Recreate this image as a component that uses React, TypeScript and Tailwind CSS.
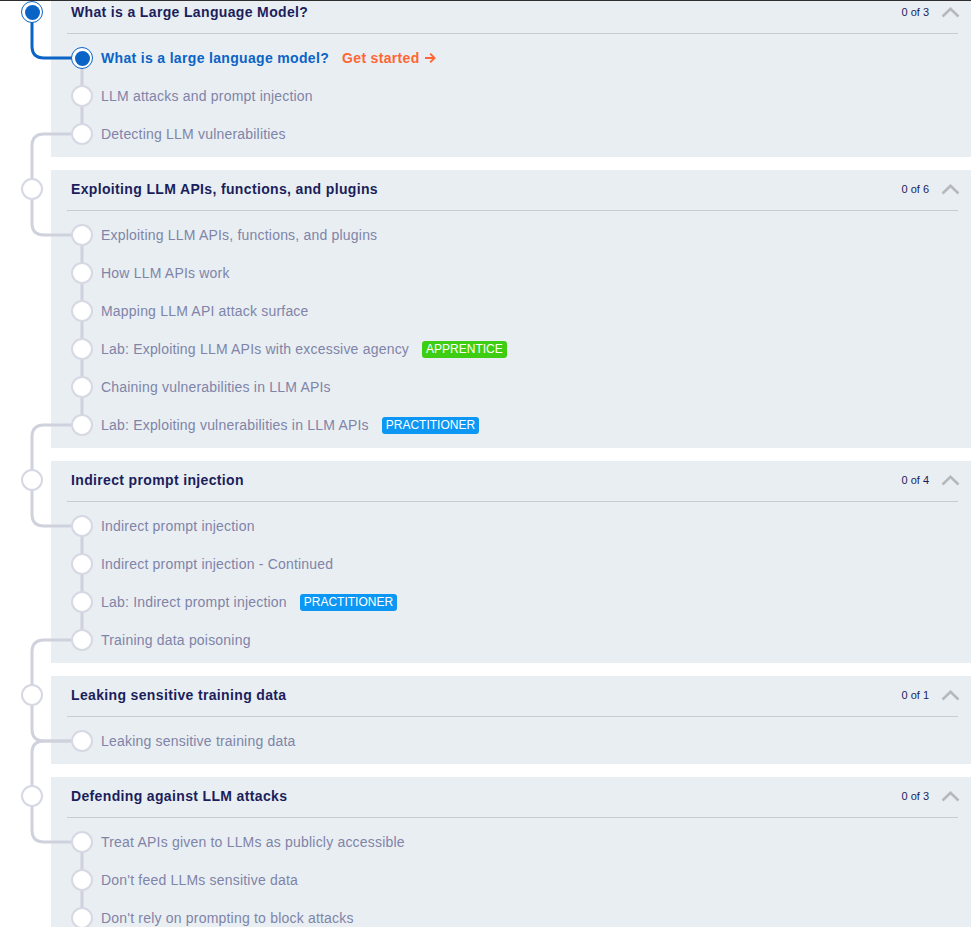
import React from 'react'

type Badge = 'apprentice' | 'practitioner'

interface Item {
    label: string
    active?: boolean
    badge?: Badge
}

interface Section {
    title: string
    active?: boolean
    items: Item[]
}

const sections: Section[] = [
    {
        title: 'What is a Large Language Model?',
        active: true,
        items: [
            { label: 'What is a large language model?', active: true },
            { label: 'LLM attacks and prompt injection' },
            { label: 'Detecting LLM vulnerabilities' }
        ]
    },
    {
        title: 'Exploiting LLM APIs, functions, and plugins',
        items: [
            { label: 'Exploiting LLM APIs, functions, and plugins' },
            { label: 'How LLM APIs work' },
            { label: 'Mapping LLM API attack surface' },
            { label: 'Lab: Exploiting LLM APIs with excessive agency', badge: 'apprentice' },
            { label: 'Chaining vulnerabilities in LLM APIs' },
            { label: 'Lab: Exploiting vulnerabilities in LLM APIs', badge: 'practitioner' }
        ]
    },
    {
        title: 'Indirect prompt injection',
        items: [
            { label: 'Indirect prompt injection' },
            { label: 'Indirect prompt injection - Continued' },
            { label: 'Lab: Indirect prompt injection', badge: 'practitioner' },
            { label: 'Training data poisoning' }
        ]
    },
    {
        title: 'Leaking sensitive training data',
        items: [{ label: 'Leaking sensitive training data' }]
    },
    {
        title: 'Defending against LLM attacks',
        items: [
            { label: 'Treat APIs given to LLMs as publicly accessible' },
            { label: "Don't feed LLMs sensitive data" },
            { label: "Don't rely on prompting to block attacks" }
        ]
    }
]

// layout numbers, kept in sync with the classes below
const HEAD = 46 // header (40) + divider (1) + top padding (5)
const ROW = 38
const GAP = 13
const panelHeight = (n: number) => HEAD + ROW * n + 4

const BIG_X = 32
const ITEM_X = 82
const R = 12
const GRAY = '#cfd1dd'
const BLUE = '#0a64c6'

function Circle({ active }: { active?: boolean }) {
    if (active) {
        return (
            <div className="relative z-10 flex h-[22px] w-[22px] shrink-0 items-center justify-center rounded-full border-[1.5px] border-[#0a64c6] bg-white">
                <div className="h-[15px] w-[15px] rounded-full bg-[#0a64c6]" />
            </div>
        )
    }
    return <div className="relative z-10 h-[22px] w-[22px] shrink-0 rounded-full border-2 border-[#d6d8e3] bg-white" />
}

function Chevron() {
    return (
        <svg width="19" height="11" viewBox="0 0 19 11" className="-mr-[2px] ml-[12px]">
            <polyline points="1.5,9.5 9.5,1.8 17.5,9.5" fill="none" stroke="#b5b9bd" strokeWidth="2.6" />
        </svg>
    )
}

function Timeline() {
    const tops: number[] = []
    let y = 0
    sections.forEach((s) => {
        tops.push(y)
        y += panelHeight(s.items.length) + GAP
    })

    const paths: { d: string; color: string }[] = []
    sections.forEach((s, i) => {
        const t = tops[i]
        const big = t + 19
        const first = t + HEAD + ROW / 2
        const last = first + ROW * (s.items.length - 1)
        paths.push({
            d: `M ${BIG_X} ${big} V ${first - R} Q ${BIG_X} ${first} ${BIG_X + R} ${first} H ${ITEM_X}`,
            color: s.items[0].active ? BLUE : GRAY
        })
        if (s.items.length > 1) {
            paths.push({ d: `M ${ITEM_X} ${first} V ${last}`, color: GRAY })
        }
        if (i < sections.length - 1) {
            const next = tops[i + 1] + 19
            paths.push({
                d: `M ${ITEM_X} ${last} H ${BIG_X + R} Q ${BIG_X} ${last} ${BIG_X} ${last + R} V ${next}`,
                color: GRAY
            })
        }
    })

    return (
        <svg className="pointer-events-none absolute left-0 top-0 z-[5] h-full w-[100px]">
            {paths.map((p, i) => (
                <path key={i} d={p.d} fill="none" stroke={p.color} strokeWidth="3" />
            ))}
        </svg>
    )
}

function BadgeTag({ kind }: { kind: Badge }) {
    return (
        <span
            className={
                kind === 'apprentice'
                    ? 'ml-[13px] rounded-[3px] bg-[#3dce14] px-[4px] text-[12px] leading-[17px] text-white'
                    : 'ml-[13px] rounded-[3px] bg-[#0b97f3] px-[4px] text-[12px] leading-[17px] text-white'
            }
        >
            {kind === 'apprentice' ? 'APPRENTICE' : 'PRACTITIONER'}
        </span>
    )
}

function SectionRow({ section }: { section: Section }) {
    const done = 0
    return (
        <div className="flex">
            <div className="w-[51px] shrink-0 pl-[21px] pt-[8px]">
                <Circle active={section.active} />
            </div>
            <div className="flex-1 bg-[#e9eef2] pb-[4px]">
                <div className="ml-[16px] mr-[13px] flex h-[41px] items-center border-b border-[#c9ccd4] pb-[2px] pl-[4px]">
                    <h3 className="flex-1 text-[14px] font-bold tracking-[0.35px] text-[#1b1e5b]">{section.title}</h3>
                    <span className="text-[11px] text-[#1b1e5b]">
                        {done} of {section.items.length}
                    </span>
                    <Chevron />
                </div>
                <ul className="pt-[5px]">
                    {section.items.map((item) => (
                        <li key={item.label} className="flex h-[38px] items-center pl-[20px]">
                            <Circle active={item.active} />
                            {item.active ? (
                                <>
                                    <span className="ml-[8px] text-[14px] font-bold tracking-[0.33px] text-[#0a64c6]">
                                        {item.label}
                                    </span>
                                    <span className="ml-[13px] flex items-center text-[14px] font-bold tracking-[0.33px] text-[#ff6633]">
                                        Get started
                                        <svg width="12" height="12" viewBox="0 0 12 12" className="ml-[4px]">
                                            <path d="M1 6 H10.5 M6.2 1.7 L10.5 6 L6.2 10.3" fill="none" stroke="#ff6633" strokeWidth="1.9" />
                                        </svg>
                                    </span>
                                </>
                            ) : (
                                <span className="ml-[8px] text-[14px] tracking-[0.2px] text-[#7f84a8]">{item.label}</span>
                            )}
                            {item.badge && <BadgeTag kind={item.badge} />}
                        </li>
                    ))}
                </ul>
            </div>
        </div>
    )
}

export default function App() {
    return (
        <div className="min-h-screen border-t border-[#2e2e2e] bg-white font-['Liberation_Sans',Arial,sans-serif]">
            <div className="h-[926px] overflow-hidden">
                <div className="relative -mt-[8px] flex flex-col gap-[13px]">
                    {sections.map((s) => (
                        <SectionRow key={s.title} section={s} />
                    ))}
                    <Timeline />
                </div>
            </div>
        </div>
    )
}
